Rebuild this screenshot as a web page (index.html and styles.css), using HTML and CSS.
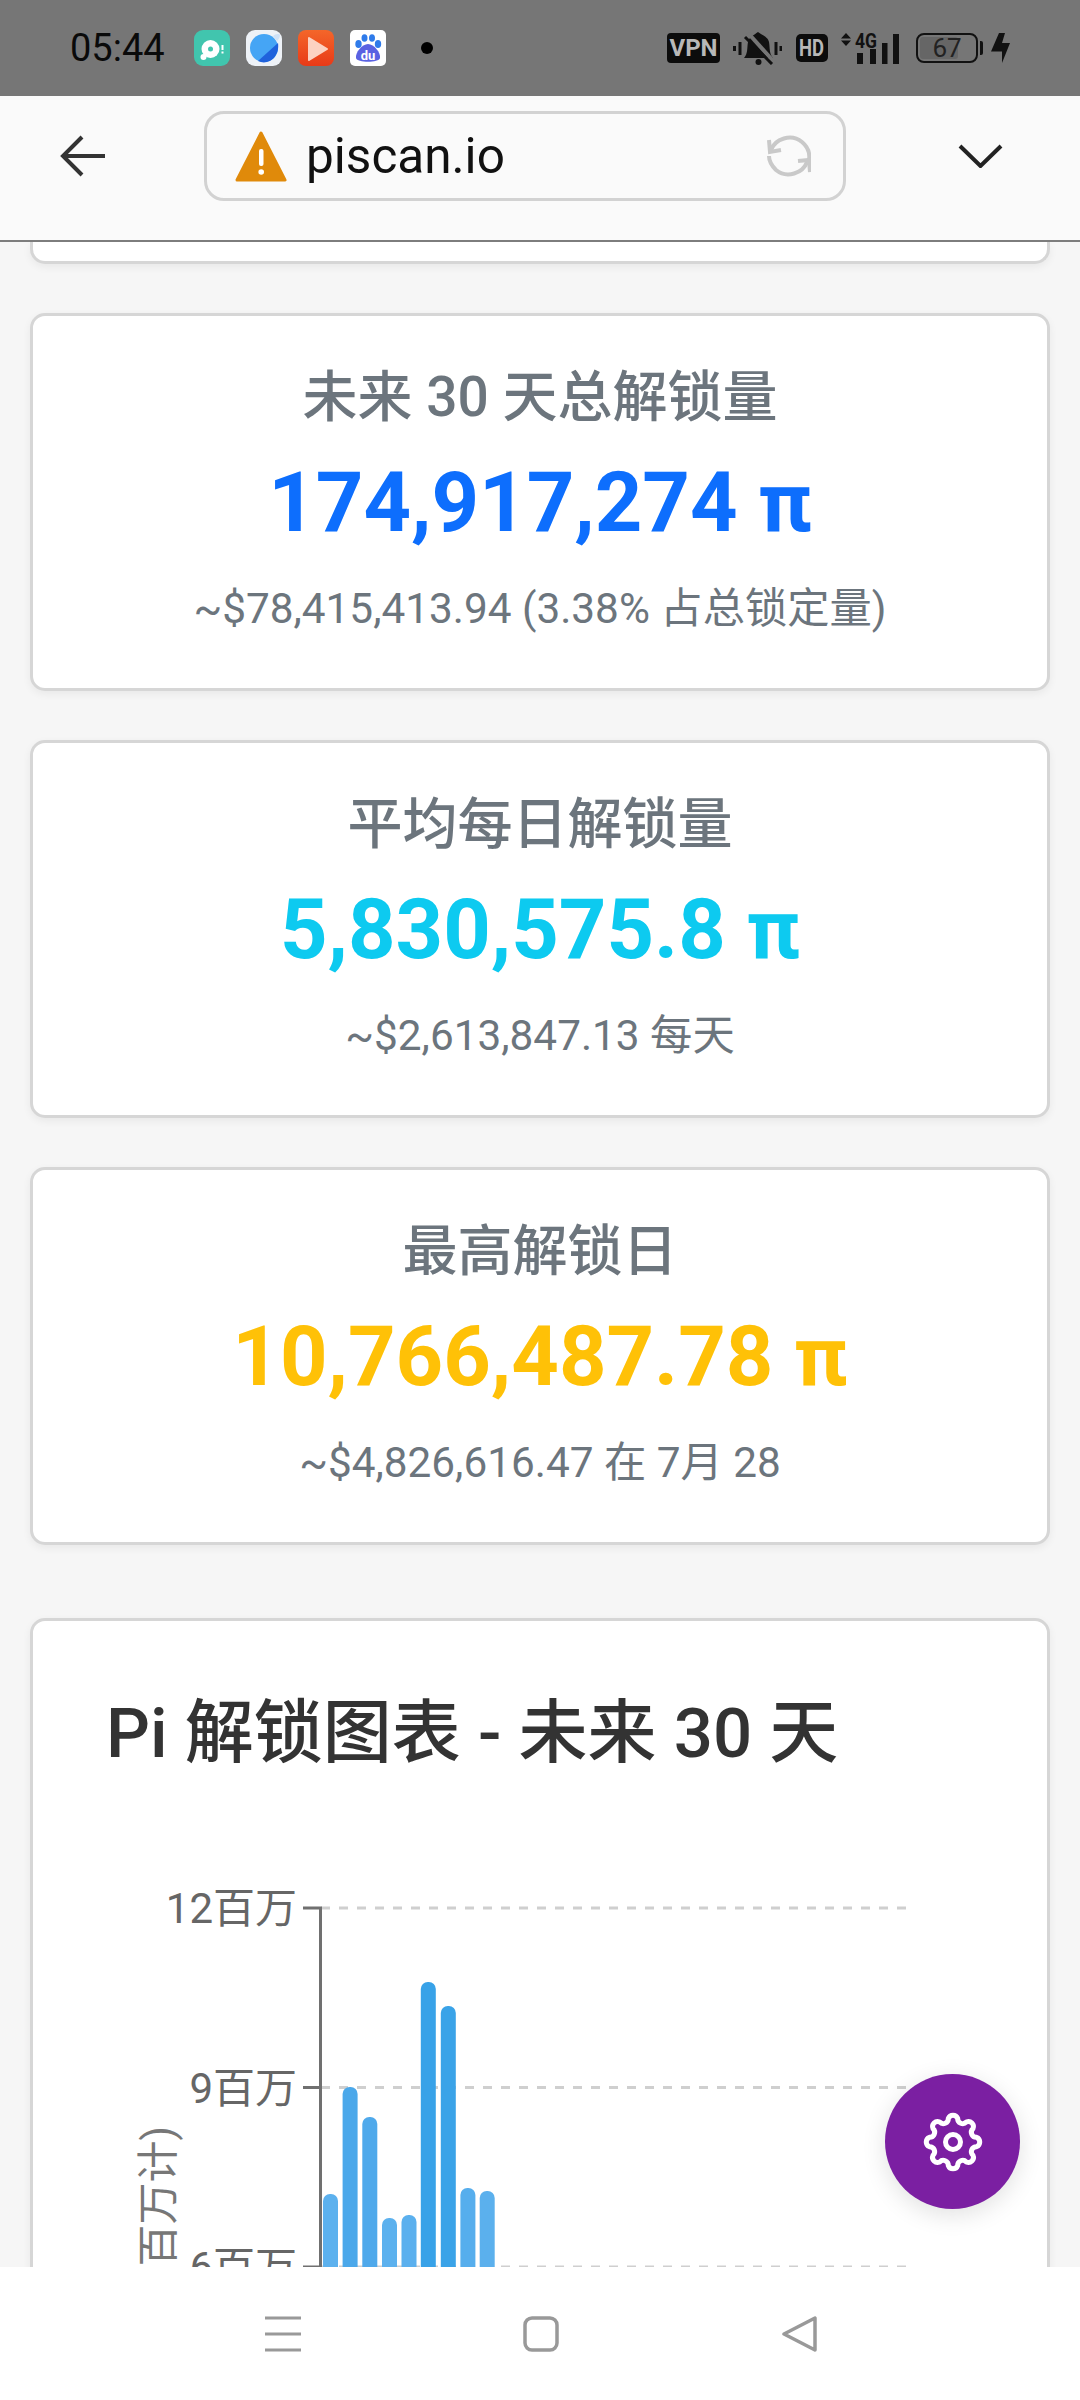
FILE: index.html
```html
<!DOCTYPE html>
<html lang="zh">
<head>
    <meta charset="UTF-8">
    <meta name="viewport" content="width=device-width, initial-scale=1.0">
    <title>Pi 解锁</title>
    <link rel="stylesheet" href="styles.css">
</head>
<body>
<div class="page">
    <!-- status bar -->
    <div class="statusbar">
        <span class="clock">05:44</span>
        <svg class="app" viewBox="0 0 36 36"><rect width="36" height="36" rx="9" fill="#41c5ae"/><circle cx="16.500" cy="19" r="9" fill="#fff"/><circle cx="16.500" cy="19" r="2.500" fill="#41c5ae"/><circle cx="9.500" cy="27" r="3" fill="#fff"/><rect x="27.500" y="15" width="2" height="5" fill="#fff"/><rect x="27.500" y="21.500" width="2" height="2" fill="#fff"/></svg>
        <svg class="app" viewBox="0 0 36 36"><rect width="36" height="36" rx="9" fill="#eef2f7"/><circle cx="18" cy="18" r="14" fill="#45a5f5"/><path d="M32 13 L12 31 C22 36 34 27 32 13 Z" fill="#1f62dc"/><path d="M27 6 C29 4 33 3 34 5 C34 7 33 9 31 11 Z" fill="#cfe2f7"/></svg>
        <svg class="app" viewBox="0 0 36 36">
            <defs><linearGradient id="playBg" x1="0" y1="0" x2="0" y2="1"><stop offset="0" stop-color="#f4662a"/><stop offset="1" stop-color="#e83a18"/></linearGradient></defs>
            <rect width="36" height="36" rx="8" fill="url(#playBg)"/><path d="M11 8 L29 19 L11 30 Z" fill="#fcd2c2" stroke="#fcd2c2" stroke-width="2" stroke-linejoin="round"/>
        </svg>
        <svg class="app" viewBox="0 0 36 36"><rect width="36" height="36" rx="5" fill="#fff"/><ellipse cx="8.500" cy="14" rx="3.200" ry="4" fill="#2f7bea"/><ellipse cx="14.500" cy="8" rx="3" ry="3.800" fill="#2f7bea"/><ellipse cx="22" cy="8" rx="3" ry="3.800" fill="#2f7bea"/><ellipse cx="28" cy="14" rx="3.200" ry="4" fill="#2f7bea"/><path d="M18 14 C24 14 31 23 30 28 C29 33 7 33 6 28 C5 23 12 14 18 14 Z" fill="#5a62e2"/><text x="18" y="30" class="app-du">du</text></svg>
        <span class="status-dot"></span>

        <div class="status-right">
            <span class="tag tag-vpn">VPN</span>
            <svg class="bell" viewBox="0 0 49 33"><path d="M11 26 C15 22 14 15 15 10 C16 5 21 3 25 0 C29 3 35 5 36 10 C37 15 36 22 40 26 Z" fill="#111"/><circle cx="25.500" cy="30" r="3" fill="#111"/><path d="M15 1 L42 31" stroke="#767676" stroke-width="4"/><path d="M12 5 L39 32" stroke="#111" stroke-width="3"/><path d="M1.500 14 V19 M7 10 V23 M43 10 V23 M48 14 V19" stroke="#111" stroke-width="3"/></svg>
            <span class="tag tag-hd"><span class="tag-narrow">HD</span></span>
            <svg class="signal" viewBox="0 -5 59 41"><path d="M5 0 L10 5.500 H0 Z M5 13 L0 7.500 H10 Z" fill="#111"/><text x="14" y="15" class="signal-txt" textLength="22" lengthAdjust="spacingAndGlyphs">4G</text><rect x="16" y="20" width="6" height="11" fill="#111"/><rect x="29" y="16" width="6" height="15" fill="#111"/><rect x="41" y="10" width="5.500" height="21" fill="#111"/><rect x="52" y="1" width="6" height="30" fill="#111"/></svg>
            <div class="battery">
                <div class="battery-body"><span class="battery-fill"></span><span class="battery-num">67</span></div>
                <span class="battery-nub"></span>
            </div>
            <svg class="bolt" viewBox="0 0 19 30"><path d="M8 0 H14 L11 10 H19 L11 30 V18.500 H0 Z" fill="#111"/></svg>
        </div>
    </div>

    <!-- browser toolbar -->
    <div class="toolbar">
        <svg class="back" viewBox="0 0 47 42"><path d="M45 21 H3 M22 2 L3 21 L22 40" fill="none" stroke="#333" stroke-width="4"/></svg>
        <div class="urlbar">
            <svg class="warn" viewBox="0 0 52 52"><path d="M26 3 L50 50 H2 Z" fill="#e08a0a" stroke="#e08a0a" stroke-width="3" stroke-linejoin="round"/><rect x="24" y="19" width="4.500" height="17" rx="2" fill="#fff"/><circle cx="26.200" cy="42" r="2.800" fill="#fff"/></svg>
            <span class="url">piscan.io</span>
            <svg class="reload" viewBox="0 0 44 44"><path d="M4 16 C8 5 24 -1 35 8 C41 13 43 20 42 26" fill="none" stroke="#c9c9c9" stroke-width="4"/><path d="M40 28 C36 39 20 45 9 36 C5 32 2 27 2 22" fill="none" stroke="#c9c9c9" stroke-width="4"/><path d="M2 6 L3 18 L14 16" fill="none" stroke="#c9c9c9" stroke-width="4"/><path d="M31 27 L42 26 L43 38" fill="none" stroke="#c9c9c9" stroke-width="4"/></svg>
        </div>
        <svg class="chevron" viewBox="0 0 45 24"><path d="M2 2 L22.500 22 L43 2" fill="none" stroke="#222" stroke-width="4"/></svg>
    </div>

    <!-- page content, cut off by the nav bar -->
    <div class="content">
        <div class="card card-stub"></div>

        <div class="card stat">
            <div class="stat-title">未来 30 天总解锁量</div>
            <div class="stat-value blue">174,917,274 π</div>
            <div class="stat-sub">~$78,415,413.94 (3.38% 占总锁定量)</div>
        </div>

        <div class="card stat">
            <div class="stat-title">平均每日解锁量</div>
            <div class="stat-value cyan">5,830,575.8 π</div>
            <div class="stat-sub">~$2,613,847.13 每天</div>
        </div>

        <div class="card stat">
            <div class="stat-title">最高解锁日</div>
            <div class="stat-value amber">10,766,487.78 π</div>
            <div class="stat-sub">~$4,826,616.47 在 7月 28</div>
        </div>

        <div class="card chart-card">
            <div class="chart-title">Pi 解锁图表 - 未来 30 天</div>
            <svg class="chart" viewBox="0 0 1020 700">
                <g class="grid">
                    <path d="M288 108 H873"/>
                    <path d="M288 287.500 H873"/>
                    <path d="M288 467 H873"/>
                </g>
                <g class="axis">
                    <path d="M287.500 108 V700"/>
                    <path d="M270 108 H289 M270 287.500 H289 M270 467 H289"/>
                </g>
                <g class="ticks">
                    <text x="264" y="123">12百万</text>
                    <text x="264" y="302.500">9百万</text>
                    <text x="264" y="482">6百万</text>
                </g>
                <text class="y-title" transform="translate(140 326) rotate(-90)">(百万计)</text>
                <g>
                    <rect x="290" y="394" width="15" height="320" rx="7" fill="#5cb1ee"/>
                    <rect x="309.600" y="287" width="15" height="430" rx="7" fill="#4ba8ea"/>
                    <rect x="329.300" y="317" width="15" height="400" rx="7" fill="#4fa9eb"/>
                    <rect x="349" y="418" width="15" height="300" rx="7" fill="#5cb1ee"/>
                    <rect x="368.500" y="415" width="15" height="300" rx="7" fill="#5bb0ee"/>
                    <rect x="387.800" y="182" width="15" height="530" rx="7" fill="#38a2e8"/>
                    <rect x="407.800" y="206" width="15" height="510" rx="7" fill="#3aa3e8"/>
                    <rect x="427.400" y="388" width="15" height="320" rx="7" fill="#56aeed"/>
                    <rect x="446.700" y="391" width="15" height="320" rx="7" fill="#5bb0ed"/>
                </g>
            </svg>
        </div>
    </div>

    <!-- system nav bar -->
    <div class="navbar">
        <svg class="nav-menu" viewBox="0 0 36 36"><path d="M0 2 H36 M0 18 H36 M0 34 H36" stroke="#999" stroke-width="3"/></svg>
        <svg class="nav-home" viewBox="0 0 36 36"><rect x="2" y="2" width="32" height="32" rx="7" fill="none" stroke="#999" stroke-width="3.500"/></svg>
        <svg class="nav-back" viewBox="0 0 36 36"><path d="M2 18 L33 2 V34 Z" fill="none" stroke="#999" stroke-width="3.500" stroke-linejoin="round"/></svg>
    </div>

    <button class="fab" type="button">
        <svg class="gear" viewBox="0 0 60 60"><path d="M53.500 25.320 A5 5 0 0 1 53.500 34.680 A5 5 0 0 0 49.960 43.330 A5 5 0 0 1 43.330 49.960 A5 5 0 0 0 34.680 53.500 A5 5 0 0 1 25.320 53.500 A5 5 0 0 0 16.670 49.960 A5 5 0 0 1 10.040 43.330 A5 5 0 0 0 6.500 34.680 A5 5 0 0 1 6.500 25.320 A5 5 0 0 0 10.040 16.670 A5 5 0 0 1 16.670 10.040 A5 5 0 0 0 25.320 6.500 A5 5 0 0 1 34.680 6.500 A5 5 0 0 0 43.330 10.040 A5 5 0 0 1 49.960 16.670 A5 5 0 0 0 53.500 25.320 Z" fill="none" stroke="#fff" stroke-width="5"/><circle cx="30" cy="30" r="7.500" fill="none" stroke="#fff" stroke-width="5"/></svg>
    </button>
</div>
</body>
</html>
```

FILE: styles.css
```css
* {
    box-sizing: border-box;
}

body {
    margin: 0;
    font-family: Roboto, "Noto Sans CJK SC", sans-serif;
    background-color: #f6f6f6;
}

.page {
    position: relative;
    width: 1080px;
    height: 2400px;
    overflow: hidden;
    display: flex;
    flex-direction: column;
}

/* Status bar */
.statusbar {
    flex: none;
    height: 96px;
    background-color: #767676;
    display: flex;
    align-items: center;
    padding: 0 70px;
}

.clock {
    font-size: 38px;
    color: #0a0a0a;
    width: 94px;
    margin-right: 30px;
}

.app {
    width: 36px;
    height: 36px;
    margin-right: 16px;
}

.app-du {
    font-size: 13px;
    font-weight: 700;
    fill: #fff;
    text-anchor: middle;
}

.status-dot {
    width: 12px;
    height: 12px;
    margin-left: 19px;
    border-radius: 50%;
    background-color: #000;
}

.status-right {
    margin-left: auto;
    display: flex;
    align-items: center;
}

.tag {
    display: flex;
    align-items: center;
    justify-content: center;
    background-color: #0c0c0c;
    color: #b8b8b8;
    font-weight: 700;
    border-radius: 4px;
}

.tag-vpn {
    width: 53px;
    height: 30px;
    font-size: 24px;
    margin-right: 13px;
}

.bell {
    width: 49px;
    height: 33px;
    margin-right: 14px;
}

.tag-hd {
    width: 32px;
    height: 28px;
    font-size: 23px;
    border-radius: 5px;
    margin-right: 13px;
}

.tag-narrow {
    transform: scaleX(0.8);
}

.signal {
    width: 59px;
    height: 41px;
    margin-right: 16px;
}

.signal-txt {
    font-size: 20px;
    font-weight: 700;
    fill: #111;
}

.battery {
    display: flex;
    align-items: center;
    margin-right: 8px;
}

.battery-body {
    position: relative;
    width: 62px;
    height: 30px;
    border: 2.5px solid #111;
    border-radius: 8px;
    overflow: hidden;
    display: flex;
    align-items: center;
    justify-content: center;
}

.battery-fill {
    position: absolute;
    left: 2px;
    top: 2px;
    bottom: 2px;
    width: 38px;
    background-color: #666;
    border-radius: 3px;
}

.battery-num {
    position: relative;
    font-size: 26px;
    color: #222;
}

.battery-nub {
    width: 3px;
    height: 14px;
    margin-left: 2px;
    background-color: #111;
    border-radius: 0 2px 2px 0;
}

.bolt {
    width: 19px;
    height: 30px;
}

/* Browser toolbar */
.toolbar {
    flex: none;
    height: 146px;
    padding: 15px 0 39px 60px;
    background-color: #fafafa;
    border-bottom: 2px solid #7d7d7d;
    display: flex;
    align-items: center;
}

.back {
    width: 47px;
    height: 42px;
    margin-right: 97px;
}

.urlbar {
    width: 642px;
    height: 90px;
    border: 3px solid #d2d2d2;
    border-radius: 20px;
    display: flex;
    align-items: center;
    padding: 0 32px 0 28px;
}

.warn {
    width: 52px;
    height: 52px;
    margin-right: 19px;
}

.url {
    font-size: 49.500px;
    color: #111;
}

.reload {
    width: 44px;
    height: 44px;
    margin-left: auto;
}

.chevron {
    width: 45px;
    height: 24px;
    margin-left: 112px;
}

/* Content */
.content {
    flex: 1;
    min-height: 0;
    overflow: hidden;
    padding: 0 30px;
}

.card {
    background-color: #fff;
    border: 3px solid #d6d6d6;
    border-radius: 15px;
    box-shadow: 0 3px 9px rgba(0, 0, 0, 0.06);
}

.card-stub {
    height: 22px;
    border-top: none;
    border-radius: 0 0 15px 15px;
    margin-bottom: 49px;
}

.stat {
    height: 378px;
    padding-top: 49px;
    margin-bottom: 49px;
    text-align: center;
}

.stat-title {
    font-size: 55px;
    line-height: 65px;
    font-weight: 500;
    color: #6c757d;
    margin-bottom: 22px;
}

.stat-value {
    font-size: 83px;
    line-height: 101px;
    font-weight: 700;
    margin-bottom: 24px;
}

.blue {
    color: #0d6efd;
}

.cyan {
    color: #0dcaf0;
}

.amber {
    color: #ffc107;
}

.stat-sub {
    font-size: 42.300px;
    line-height: 63px;
    color: #6c757d;
}

.chart-card {
    margin-top: 73px;
    height: 900px;
    padding: 75px 0 0 73px;
}

.chart-title {
    font-size: 69px;
    line-height: 76px;
    font-weight: 500;
    color: #333;
}

.chart {
    display: block;
    width: 1020px;
    height: 700px;
    margin: 28px 0 0 -73px;
}

.grid path {
    stroke: #cfcfcf;
    stroke-width: 3;
    stroke-dasharray: 9 9;
    fill: none;
}

.axis path {
    stroke: #707070;
    stroke-width: 3;
    fill: none;
}

.ticks text {
    font-size: 42px;
    fill: #666;
    text-anchor: end;
}

.y-title {
    font-size: 42px;
    fill: #777;
    text-anchor: end;
}

/* Nav bar */
.navbar {
    flex: none;
    height: 133px;
    background-color: #fff;
    display: flex;
    align-items: flex-start;
    padding: 49px 0 0 265px;
}

.nav-menu,
.nav-home,
.nav-back {
    width: 36px;
    height: 36px;
}

.nav-home {
    margin-left: 222px;
}

.nav-back {
    margin-left: 223px;
}

/* Settings button */
.fab {
    position: absolute;
    right: 60px;
    bottom: 191px;
    width: 135px;
    height: 135px;
    padding: 0;
    border: none;
    border-radius: 50%;
    background-color: #7b1fa2;
    box-shadow: 0 6px 24px rgba(0, 0, 0, 0.12);
    display: flex;
    align-items: center;
    justify-content: center;
}

.gear {
    width: 60px;
    height: 60px;
}
```
